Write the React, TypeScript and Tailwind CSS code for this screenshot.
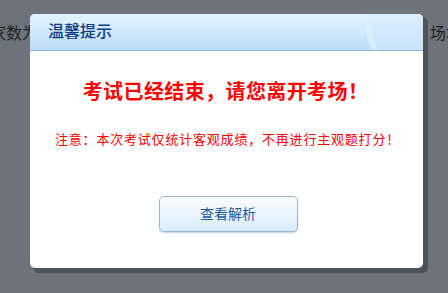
const font = { fontFamily: '"Liberation Sans", "Noto Sans CJK SC", sans-serif' };

export default function App() {
  return (
    <div className="relative w-[448px] h-[293px] overflow-hidden bg-[#6d737a]" style={font}>
      {/* page text behind the mask */}
      <div className="flex justify-between pt-[24px] ml-[-10px] mr-[-14px] text-[16px] leading-[20px] text-[#1e1e1e] whitespace-nowrap">
        <span>家数为</span>
        <span>场址</span>
      </div>

      {/* dialog */}
      <div className="absolute left-[30px] top-[14px] w-[393px] h-[254px] rounded-[5px] bg-white shadow-[4px_4px_0_1px_#4f5357] flex flex-col overflow-hidden">
        <div className="relative h-[37px] shrink-0 border-b border-[#87b4e8] bg-gradient-to-b from-[#e4f4ff] to-[#bcdcf8] overflow-hidden">
          <div className="absolute left-[335px] top-[-70px] w-[150px] h-[150px] rounded-full border-[6px] border-[#dff0fe]/60 bg-[#d4eafc]/50" />
          <span className="relative block pl-[18px] pt-[8px] text-[16px] leading-[20px] font-medium text-[#0f3c8a]">温馨提示</span>
        </div>

        <div className="flex flex-col items-center">
          <p className="mt-[29px] ml-[-2px] text-[20px] leading-[24px] font-bold text-[#ff0000] tracking-[0.4px]">
            考试已经结束，请您离开考场！
          </p>
          <p className="mt-[27px] ml-[2px] text-[13px] leading-[18px] text-[#ff0000] tracking-[0.8px]">
            注意：本次考试仅统计客观成绩，不再进行主观题打分！
          </p>
          <button className="mt-[47px] ml-[3px] w-[139px] h-[36px] rounded-[5px] border border-[#95b6d6] bg-gradient-to-b from-[#fbfdff] to-[#d7ecfd] text-[14px] text-[#1f5a9c] shadow-[0_1px_1px_#c5d6e6]">
            查看解析
          </button>
        </div>
      </div>
    </div>
  );
}
